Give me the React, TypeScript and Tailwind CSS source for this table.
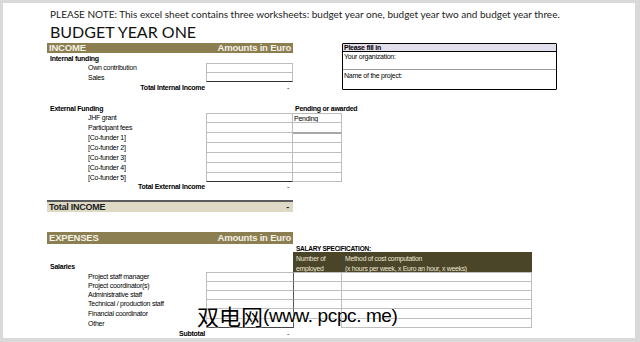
import React from "react";

const SANS = "font-['Liberation_Sans',Arial,sans-serif]";

function AmountCell({ last = false, dark = false, right = "" }: { last?: boolean; dark?: boolean; right?: string }) {
  return (
    <div
      className={`w-[87px] h-full border-l border-r border-t border-[#bdbdbd] ${last ? (dark ? "border-b-[1.5px] border-b-[#333]" : "border-b") : ""} flex items-center justify-end pr-[3px]`}
    >
      {right}
    </div>
  );
}

function Label({ children, indent = true, bold = false }: { children?: React.ReactNode; indent?: boolean; bold?: boolean }) {
  return (
    <div className={`w-[159px] h-full flex items-center ${indent ? "pl-[41px]" : "pl-[3px]"} ${bold ? "font-bold" : ""} whitespace-nowrap`}>
      {children}
    </div>
  );
}

function BrownBar({ left, right }: { left: string; right: string }) {
  return (
    <div className="w-[246px] h-full bg-[#8b7e50] flex items-center justify-between px-[2px] text-[#f4f1e6] font-bold text-[9.5px] leading-none tracking-[-0.2px]">
      <span>{left}</span>
      <span>{right}</span>
    </div>
  );
}

export default function App() {
  const ext = ["JHF grant", "Participant fees", "[Co-funder 1]", "[Co-funder 2]", "[Co-funder 3]", "[Co-funder 4]", "[Co-funder 5]"];
  const extH = ["h-[9px]", "h-[10px]", "h-[10px]", "h-[10px]", "h-[10px]", "h-[10px]", "h-[10px]"];
  const sal = ["Project staff manager", "Project coordinator(s)", "Administrative staff", "Technical / production staff", "Financial coordinator", "Other"];
  const salH = ["h-[9px]", "h-[9px]", "h-[9px]", "h-[9px]", "h-[10px]", "h-[10px]"];

  return (
    <div className="w-[640px] h-[342px] bg-[#d9d9d9] pt-[3px] pl-[3px] overflow-hidden">
      <div className={`relative w-[632px] h-[335px] bg-white overflow-hidden pl-[44px] text-black ${SANS}`}>
        {/* note */}
        <div className="mt-[4px] h-[14px] flex items-center pl-[3px] font-['Lato',sans-serif] text-[10px] text-[#222] whitespace-nowrap">
          PLEASE NOTE: This excel sheet contains three worksheets: budget year one, budget year two and budget year three.
        </div>
        <div className="h-[22px] flex items-center pl-[3px] font-['Lato',sans-serif] text-[16px] text-[#111] whitespace-nowrap">
          BUDGET YEAR ONE
        </div>

        {/* section 1 */}
        <div className="flex items-start text-[7px] leading-none tracking-[-0.25px]">
          <div className="w-[246px] flex flex-col">
            <div className="h-[10px]">
              <BrownBar left="INCOME" right="Amounts in Euro" />
            </div>
            <div className="h-[10px] flex">
              <Label indent={false} bold>Internal funding</Label>
            </div>
            <div className="h-[9px] flex">
              <Label>Own contribution</Label>
              <AmountCell />
            </div>
            <div className="h-[10px] flex">
              <Label>Sales</Label>
              <AmountCell last dark />
            </div>
            <div className="h-[10px] flex">
              <div className="w-[159px] h-full flex items-center justify-end pr-[1px] font-bold whitespace-nowrap">Total Internal Income</div>
              <div className="w-[87px] h-full flex items-center justify-end pr-[4px]">-</div>
            </div>
          </div>
          <div className="ml-[49px] w-[215px] h-[47px] border-[1.5px] border-black rounded-[1px] flex flex-col">
            <div className="h-[8px] bg-[#e3deec] border-b-[1.5px] border-black flex items-center pl-[1px] font-bold">Please fill in</div>
            <div className="h-[18px] border-b-[1.5px] border-[#9a9a9a] pl-[1px] pt-[1px]">Your organization:</div>
            <div className="flex-1 pl-[1px] pt-[2px]">Name of the project:</div>
          </div>
        </div>

        <div className="h-[11px]" />

        {/* section 2 */}
        <div className="flex flex-col text-[7px] leading-none tracking-[-0.25px]">
          <div className="h-[10px] flex">
            <Label indent={false} bold>External Funding</Label>
            <div className="w-[87px]" />
            <div className="pl-[2px] h-full flex items-center font-bold whitespace-nowrap">Pending or awarded</div>
          </div>
          {ext.map((t, i) => (
            <div key={t} className={`${extH[i]} flex`}>
              <Label>{t}</Label>
              <AmountCell last={i === ext.length - 1} dark={i === ext.length - 1} />
              <div className={`w-[49px] h-full border-r border-t border-[#bdbdbd] ${i === ext.length - 1 ? "border-b" : ""} ${i === 2 ? "border-t-[2px] border-t-[#a8a8a8]" : ""} flex items-center pl-[1px]`}>
                {i === 0 ? "Pending" : ""}
              </div>
            </div>
          ))}
          <div className="h-[9px] flex">
            <div className="w-[159px] h-full flex items-center justify-end pr-[1px] font-bold whitespace-nowrap">Total External Income</div>
            <div className="w-[87px] h-full flex items-center justify-end pr-[4px]">-</div>
          </div>
          <div className="h-[9px]" />
          <div className="h-[12px] w-[246px] bg-[#ddd9c4] border-t-[2px] border-[#5a5a5a] flex items-center justify-between px-[2px] font-bold text-[9px] text-[#1a1a1a]">
            <span>Total INCOME</span>
            <span className="pr-[2px]">-</span>
          </div>
          <div className="h-[20px]" />
          <div className="h-[12px]">
            <BrownBar left="EXPENSES" right="Amounts in Euro" />
          </div>
          <div className="h-[8px] flex">
            <div className="w-[246px]" />
            <div className="pl-[3px] h-full flex items-end font-bold whitespace-nowrap text-[6.5px]">SALARY SPECIFICATION:</div>
          </div>
          <div className="h-[20px] flex">
            <div className="w-[159px] h-full flex items-end pb-[2px] pl-[3px] font-bold">Salaries</div>
            <div className="w-[87px]" />
            <div className="w-[239px] h-full bg-[#4a4428] flex text-[#ece8d6] text-[6.8px] overflow-hidden">
              <div className="w-[49px] pl-[3px] pt-[2px] leading-[10px] whitespace-nowrap">Number of<br />employed</div>
              <div className="flex-1 pl-[3px] pt-[2px] leading-[10px] whitespace-nowrap">Method of cost computation<br />(x hours per week, x Euro an hour, x weeks)</div>
            </div>
          </div>
          {sal.map((t, i) => (
            <div key={t} className={`${salH[i]} flex`}>
              <Label>{t}</Label>
              <div className={`w-[87px] h-full border-l border-t border-[#bdbdbd] ${i === sal.length - 1 ? "border-b-[1.5px] border-b-[#444]" : ""}`} />
              <div className="w-[49px] h-full border-l border-l-[#555] border-r border-t border-[#bdbdbd]" />
              <div className={`w-[190px] h-full border-r border-t border-[#bdbdbd] ${i === sal.length - 1 ? "border-b" : ""}`} />
            </div>
          ))}
          <div className="h-[10px] flex">
            <div className="w-[159px] h-full flex items-center justify-end pr-[1px] font-bold whitespace-nowrap">Subtotal</div>
            <div className="w-[87px] h-full flex items-center justify-end pr-[4px]">-</div>
          </div>
        </div>

        {/* watermark */}
        <div className="absolute left-[194px] top-[300px] h-[24px] flex items-center leading-none text-black whitespace-nowrap [text-shadow:0_0_2px_#fff,0_0_2px_#fff]">
          <span className="font-['Noto_Sans_CJK_SC','Noto_Sans',sans-serif] text-[22px] leading-none">双电网</span>
          <span className="font-['Liberation_Sans',Arial,sans-serif] text-[19px] leading-none tracking-[-0.4px]">(www. pcpc. me)</span>
        </div>
      </div>
    </div>
  );
}
